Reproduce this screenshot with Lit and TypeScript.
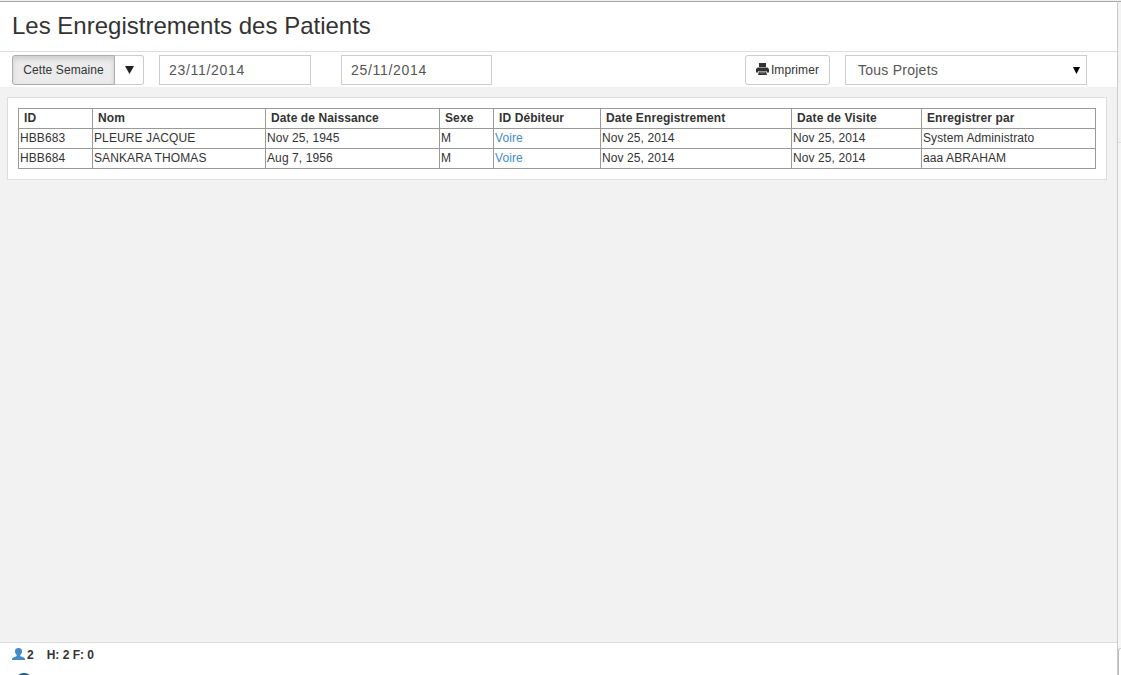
import { LitElement, html, css } from "lit";
import { customElement } from "lit/decorators.js";

const COLUMNS = [
  { label: "ID", width: 74 },
  { label: "Nom", width: 173 },
  { label: "Date de Naissance", width: 174 },
  { label: "Sexe", width: 54 },
  { label: "ID Débiteur", width: 107 },
  { label: "Date Enregistrement", width: 191 },
  { label: "Date de Visite", width: 130 },
  { label: "Enregistrer par", width: 174 },
];

const PATIENTS = [
  ["HBB683", "PLEURE JACQUE", "Nov 25, 1945", "M", "Voire", "Nov 25, 2014", "Nov 25, 2014", "System Administrato"],
  ["HBB684", "SANKARA THOMAS", "Aug 7, 1956", "M", "Voire", "Nov 25, 2014", "Nov 25, 2014", "aaa ABRAHAM"],
];

@customElement("patient-table")
class PatientTable extends LitElement {
  static styles = css`
    :host { display: block; background: #fff; border: 1px solid #ddd; padding: 10px; box-sizing: border-box; height: 83px; }
    .grid { table-layout: fixed; width: 1078px; border-collapse: separate; border-spacing: 0;
      border-top: 1px solid #999; border-left: 1px solid #999; box-sizing: border-box; }
    .head, .cell { box-sizing: border-box; height: 20px; line-height: 18px; padding: 0 0 1px 1px; text-align: left;
      white-space: nowrap; border-right: 1px solid #999; border-bottom: 1px solid #999; font-size: 12px; }
    .head { padding-left: 5px; font-weight: bold; letter-spacing: 0.1px; }
    .cell { letter-spacing: 0.1px; }
    .link { color: #428bca; text-decoration: none; }
  `;
  render() {
    return html`<table class="grid">
      <colgroup>${COLUMNS.map((c) => html`<col width=${c.width} />`)}</colgroup>
      <thead><tr>${COLUMNS.map((c) => html`<th class="head">${c.label}</th>`)}</tr></thead>
      <tbody>${PATIENTS.map((row) => html`<tr>${row.map((v, i) =>
        html`<td class="cell">${i === 4 ? html`<a class="link">${v}</a>` : v}</td>`)}</tr>`)}</tbody>
    </table>`;
  }
}

@customElement("app-root")
class AppRoot extends LitElement {
  static styles = css`
    :host { display: flex; width: 1121px; height: 675px; overflow: hidden; box-sizing: border-box;
      font-family: "Liberation Sans", Arial, sans-serif; color: #333; background: #f2f2f2; border-top: 1px solid #eee; }
    .page { width: 1117px; display: flex; flex-direction: column; border-top: 1px solid #aaa; border-right: 1px solid #ccc; flex: none; }
    .rail { flex: 1; border-top: 1px solid #aaa; display: flex; flex-direction: column; }
    .rail-top { height: 140px; background: #f3f3f3; border-bottom: 1px solid #ddd; }
    .rail-mid { height: 505px; background: #f6f6f6; }
    .rail-end { flex: 1; background: #fff; border-left: 1px solid #bbb; border-top: 1px solid #ccc; border-top-left-radius: 3px; }
    .title { margin: 0; height: 49px; line-height: 47px; padding-left: 12px; background: #fff; border-bottom: 1px solid #ddd;
      font-size: 24px; font-weight: normal; white-space: nowrap; }
    .tools { height: 35px; background: #fff; display: flex; align-items: flex-start; padding: 3px 0 0 12px; box-sizing: border-box; }
    .btn { box-sizing: border-box; height: 30px; border: 1px solid #ccc; background: #fff; font-size: 12px; display: flex;
      align-items: center; justify-content: center; white-space: nowrap; }
    .period { width: 103px; background: #ebebeb; border-color: #adadad; border-radius: 3px 0 0 3px; letter-spacing: .1px;
      box-shadow: inset 0 3px 5px rgba(0, 0, 0, .125); }
    .more { width: 29px; border-left: 0; border-radius: 0 3px 3px 0; margin-right: 15px; }
    .field { box-sizing: border-box; height: 30px; width: 152px; border: 1px solid #ccc; padding-left: 9px; line-height: 28px;
      font-size: 14px; color: #555; letter-spacing: .7px; }
    .until { margin-left: 30px; width: 151px; }
    .print { width: 85px; border-radius: 3px; margin-left: 253px; gap: 2px; letter-spacing: .1px; }
    .glyph { flex: none; margin-top: -2px; }
    .select { width: 242px; margin-left: 15px; padding: 0 6px 0 12px; display: flex; align-items: center; justify-content: space-between; letter-spacing: .25px; }
    .body { flex: 1; padding: 10px 10px 0 7px; }
    .foot { height: 32px; background: #fff; border-top: 1px solid #ddd; padding-left: 12px; display: flex; flex-direction: column; overflow: hidden; }
    .stats { height: 23px; flex: none; display: flex; align-items: center; font-size: 12px; font-weight: bold; }
    .count { margin: 0 13px 0 2px; }
    .badge { display: block; flex: none; margin: 7px 0 0 3px; }
  `;
  render() {
    return html`
      <div class="page">
        <h1 class="title">Les Enregistrements des Patients</h1>
        <div class="tools">
          <div class="btn period">Cette Semaine</div>
          <div class="btn more"><svg width="9" height="8"><path d="M0 0h9L4.5 8z" fill="#222" /></svg></div>
          <div class="field">23/11/2014</div>
          <div class="field until">25/11/2014</div>
          <div class="btn print">
            <svg class="glyph" width="13" height="12" viewBox="0 0 13 12" fill="#333"><path d="M3 0h7v4H3z" /><path d="M1.500 4.500h10L13 6v3.500h-2L10.500 8h-8L2 9.500H0V6z" /><path d="M3 8.600h7l1 3.400H2z" /><path d="M3.500 9.400h6v.900h-6z" fill="#999" /></svg>
            <span>Imprimer</span>
          </div>
          <div class="field select"><span>Tous Projets</span><svg width="7" height="7"><path d="M0 0h7L3.500 7z" fill="#000" /></svg></div>
        </div>
        <div class="body"><patient-table></patient-table></div>
        <div class="foot">
          <div class="stats">
            <svg class="glyph" width="13" height="12" viewBox="0 0 13 12"><path d="M6.500 0C8.700 0 10 1.200 10 3.200c0 1.700-.800 3-1.700 3.800v1c.5.600 2.700 1 3.900 1.800.6.400.8 1 .8 2.200H0c0-1.200.2-1.800.8-2.200C2 9 4.200 8.600 4.700 8V7C3.800 6.200 3 4.900 3 3.200 3 1.200 4.300 0 6.500 0z" fill="#428bca" /></svg>
            <span class="count">2</span><span>H: 2 F: 0</span>
          </div>
          <svg class="badge" width="18" height="18"><circle cx="9" cy="9" r="9" fill="#1d5380" /></svg>
        </div>
      </div>
      <div class="rail"><div class="rail-top"></div><div class="rail-mid"></div><div class="rail-end"></div></div>
    `;
  }
}
